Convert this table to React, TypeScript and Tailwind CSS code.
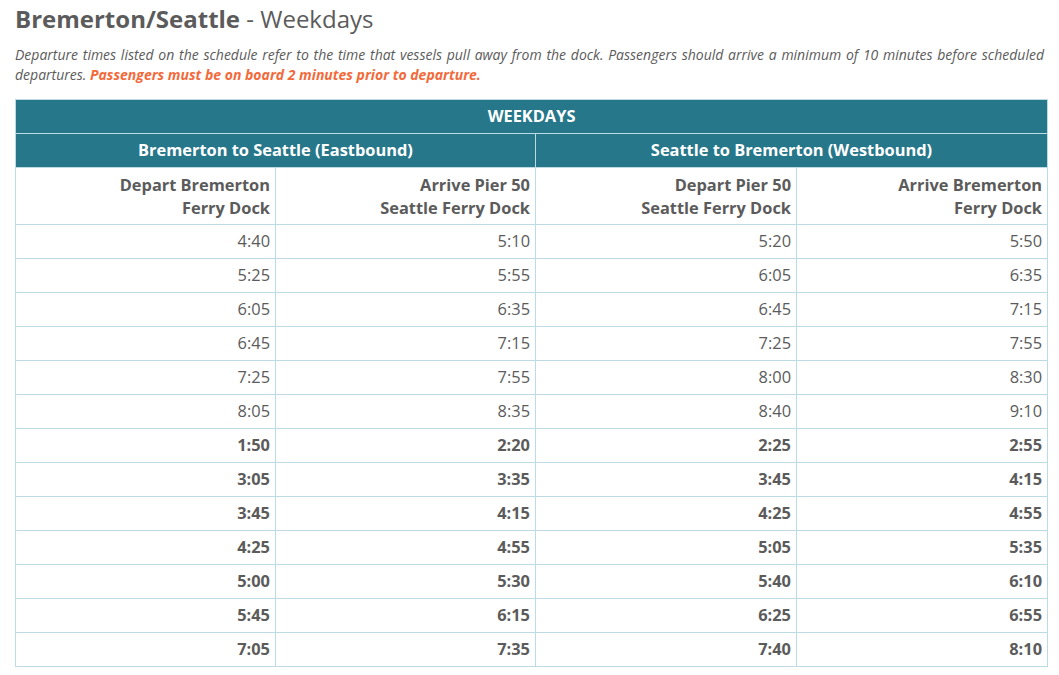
const rows: [string, string, string, string, boolean][] = [
  ["4:40", "5:10", "5:20", "5:50", false],
  ["5:25", "5:55", "6:05", "6:35", false],
  ["6:05", "6:35", "6:45", "7:15", false],
  ["6:45", "7:15", "7:25", "7:55", false],
  ["7:25", "7:55", "8:00", "8:30", false],
  ["8:05", "8:35", "8:40", "9:10", false],
  ["1:50", "2:20", "2:25", "2:55", true],
  ["3:05", "3:35", "3:45", "4:15", true],
  ["3:45", "4:15", "4:25", "4:55", true],
  ["4:25", "4:55", "5:05", "5:35", true],
  ["5:00", "5:30", "5:40", "6:10", true],
  ["5:45", "6:15", "6:25", "6:55", true],
  ["7:05", "7:35", "7:40", "8:10", true],
];

const subHeads = [
  ["Depart Bremerton", "Ferry Dock"],
  ["Arrive Pier 50", "Seattle Ferry Dock"],
  ["Depart Pier 50", "Seattle Ferry Dock"],
  ["Arrive Bremerton", "Ferry Dock"],
];

export default function App() {
  return (
    <div className="min-h-screen bg-white px-[15px] pt-[3px] text-[#5b5b5b] [font-family:'Open_Sans',sans-serif]">
      <h1 className="text-[24px] leading-[32px]">
        <span className="font-bold">Bremerton/Seattle</span> - Weekdays
      </h1>
      <p className="mt-[10px] text-justify text-[14px] italic leading-[20px]">
        Departure times listed on the schedule refer to the time that vessels pull away from the dock. Passengers should
        arrive a minimum of 10 minutes before scheduled departures.{" "}
        <span className="font-bold text-[#f26a3b]">Passengers must be on board 2 minutes prior to departure.</span>
      </p>
      <table className="mt-[14px] w-[1032px] table-fixed border-collapse text-[16.4px]">
        <colgroup>
          <col className="w-[260px]" />
          <col className="w-[260px]" />
          <col className="w-[261px]" />
          <col className="w-[251px]" />
        </colgroup>
        <thead>
          <tr>
            <th
              colSpan={4}
              className="h-[34px] border border-[#bcdbe2] bg-[#27778a] text-center font-bold text-white"
            >
              WEEKDAYS
            </th>
          </tr>
          <tr>
            <th
              colSpan={2}
              className="h-[34px] border border-[#bcdbe2] bg-[#27778a] text-center font-bold text-white"
            >
              Bremerton to Seattle (Eastbound)
            </th>
            <th
              colSpan={2}
              className="h-[34px] border border-[#bcdbe2] bg-[#27778a] text-center font-bold text-white"
            >
              Seattle to Bremerton (Westbound)
            </th>
          </tr>
          <tr>
            {subHeads.map(([a, b], i) => (
              <th
                key={i}
                className="h-[57px] border border-[#bcdbe2] px-[5px] text-right font-bold leading-[23px]"
              >
                {a}
                <br />
                {b}
              </th>
            ))}
          </tr>
        </thead>
        <tbody>
          {rows.map(([a, b, c, d, bold], i) => (
            <tr key={i} className={bold ? "font-bold" : "font-normal"}>
              {[a, b, c, d].map((t, j) => (
                <td key={j} className="h-[34px] border border-[#bcdbe2] px-[5px] text-right">
                  {t}
                </td>
              ))}
            </tr>
          ))}
        </tbody>
      </table>
    </div>
  );
}
